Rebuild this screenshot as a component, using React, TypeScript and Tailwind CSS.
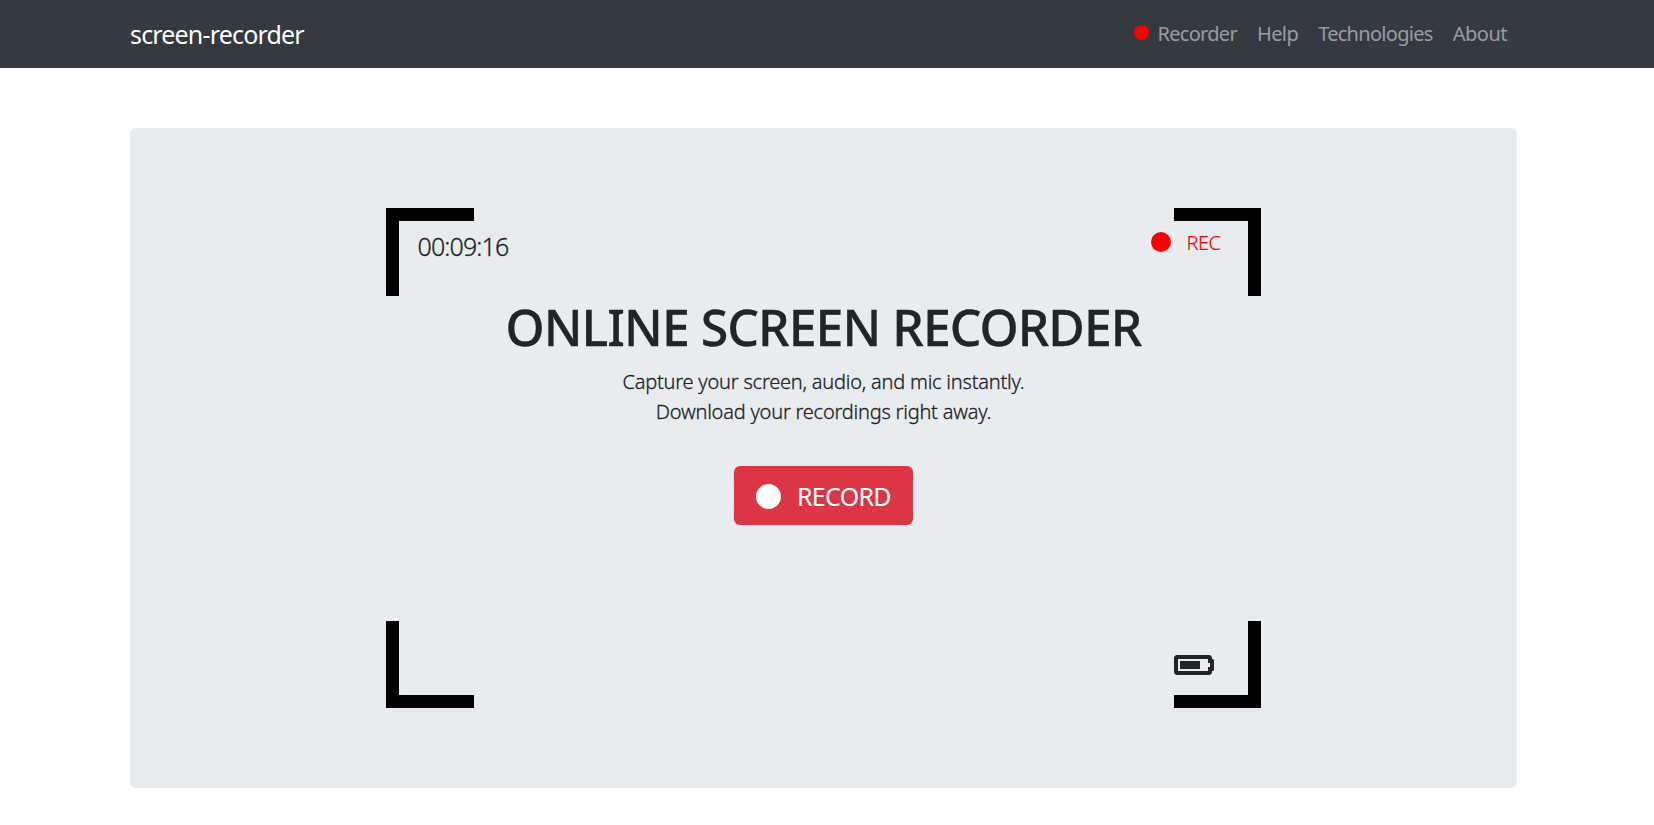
function Dot({ className }: { className: string }) {
  return <span className={`block shrink-0 rounded-full ${className}`} />;
}

function Navbar() {
  return (
    <nav className="h-[68px] bg-[#343a40]">
      <div className="ml-[130px] flex h-full w-[1387px] items-center justify-between">
        <a href="#" className="text-[25px] leading-[38px] tracking-[-0.83px] text-white">
          screen-recorder
        </a>
        <div className="mb-px flex items-center gap-5 pr-[10px] text-[20px] leading-[30px] text-white/50">
          <a href="#" className="flex items-center gap-2 tracking-[-0.7px]">
            <Dot className="mb-0.5 size-[15px] bg-[#ff0000]" />
            Recorder
          </a>
          <a href="#" className="tracking-[-0.6px]">Help</a>
          <a href="#" className="tracking-[-0.7px]">Technologies</a>
          <a href="#" className="tracking-[-0.5px]">About</a>
        </div>
      </div>
    </nav>
  );
}

function Corners() {
  return (
    <>
      <span className="absolute left-0 top-0 h-[88px] w-[88px] border-l-[13px] border-t-[13px] border-black" />
      <span className="absolute right-0 top-0 h-[88px] w-[87px] border-r-[13px] border-t-[13px] border-black" />
      <span className="absolute bottom-0 left-0 h-[87px] w-[88px] border-b-[13px] border-l-[13px] border-black" />
      <span className="absolute bottom-0 right-0 h-[87px] w-[87px] border-b-[13px] border-r-[13px] border-black" />
    </>
  );
}

function BatteryIcon() {
  return (
    <svg viewBox="0 96 640 320" className="h-5 w-10" fill="currentColor" aria-hidden="true">
      <path d="M544 160v64h32v64h-32v64H64V160h480m16-64H48c-26.51 0-48 21.49-48 48v224c0 26.51 21.49 48 48 48h512c26.51 0 48-21.49 48-48v-16h8c13.255 0 24-10.745 24-24V184c0-13.255-10.745-24-24-24h-8v-16c0-26.51-21.49-48-48-48zm-144 96H96v128h320V192z" />
    </svg>
  );
}

function Viewfinder() {
  return (
    <div className="relative flex h-[500px] w-[875px] flex-col items-center pb-[33px] pt-[19px]">
      <Corners />
      <div className="flex w-full items-start justify-between pl-[31.5px] pr-[40px]">
        <span className="text-[25px] font-light leading-[38px] tracking-[-0.87px] [-webkit-text-stroke:0.3px_currentColor]">
          00:09:16
        </span>
        <span className="flex items-start gap-[15.5px] text-[20px] font-light leading-[32px] tracking-[-0.5px] text-[#ff0000] [-webkit-text-stroke:0.2px_currentColor]">
          <Dot className="mt-[5px] size-5 bg-[#ff0000]" />
          <span className="w-[34.5px]">REC</span>
        </span>
      </div>
      <h1 className="mt-8 whitespace-nowrap text-[50px] font-medium leading-[60px] tracking-[-0.98px] [-webkit-text-stroke:0.3px_currentColor]">
        ONLINE SCREEN RECORDER
      </h1>
      <p className="mt-[10px] text-center text-[20px] font-light leading-[30px] tracking-[-0.22px] [-webkit-text-stroke:0.3px_currentColor]">
        Capture your screen, audio, and mic instantly.
        <br />
        Download your recordings right away.
      </p>
      <button className="mt-[39px] flex h-[59px] w-[179px] items-center rounded-md bg-[#dc3545] pl-[22px] text-[25px] leading-[38px] tracking-[-0.7px] text-white">
        <Dot className="mr-4 mt-[2px] size-[25px] bg-white" />
        RECORD
      </button>
      <div className="mt-auto w-full pl-[788px]">
        <BatteryIcon />
      </div>
    </div>
  );
}

export default function App() {
  return (
    <div className="min-h-[825px] overflow-hidden bg-white font-['Noto_Sans','Open_Sans',sans-serif] text-[#212529]">
      <Navbar />
      <main className="ml-[130px] mt-[60px] flex h-[660px] w-[1387px] rounded-md bg-[#e9ecef] pl-[256px] pt-20">
        <Viewfinder />
      </main>
    </div>
  );
}
